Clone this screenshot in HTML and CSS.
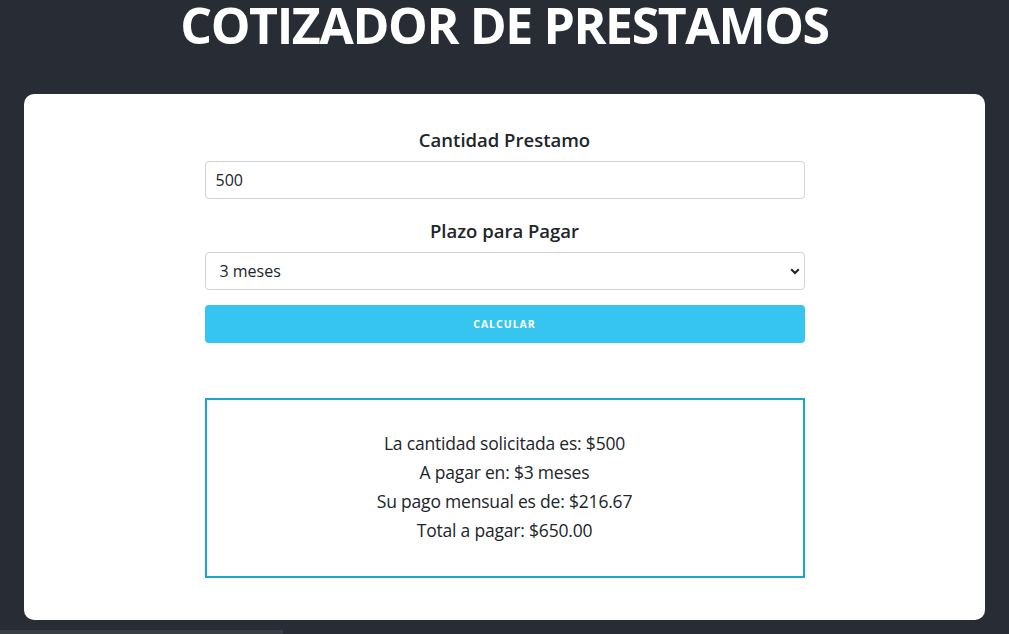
FILE: index.html
```html
<!DOCTYPE html>
<html lang="es">
<head>
<meta charset="utf-8">
<title>Cotizador de Prestamos</title>
<link rel="stylesheet" href="styles.css">
</head>
<body>
<h1 class="title">COTIZADOR DE PRESTAMOS</h1>
<main class="card">
  <form class="form">
    <div class="field">
      <label class="label" for="cantidad">Cantidad Prestamo</label>
      <input class="input" id="cantidad" type="text" value="500">
    </div>
    <div class="field">
      <label class="label" for="plazo">Plazo para Pagar</label>
      <div class="select-wrap">
        <select class="select" id="plazo">
          <option>3 meses</option>
        </select>
        <svg class="chev" width="10" height="7" viewBox="0 0 10 7"><path d="M1.2 1.2 L5 5 L8.8 1.2" fill="none" stroke="#222" stroke-width="2"/></svg>
      </div>
    </div>
    <button class="button" type="button">CALCULAR</button>
  </form>
  <section class="result">
    <p>La cantidad solicitada es: $500</p>
    <p>A pagar en: $3 meses</p>
    <p>Su pago mensual es de: $216.67</p>
    <p>Total a pagar: $650.00</p>
  </section>
</main>
<div class="bottom-bar"></div>
</body>
</html>
```

FILE: styles.css
```css
* { box-sizing: border-box; }
html, body { margin: 0; padding: 0; }
body {
  background: #282c34;
  font-family: "Open Sans", "Noto Sans", sans-serif;
  height: 634px;
  overflow: hidden;
  position: relative;
}
.title {
  margin: 0;
  height: 94px;
  padding-top: 0;
  text-align: center;
  color: #fff;
  font-size: 50px;
  font-weight: 700;
  letter-spacing: -1.4px;
  line-height: 50px;
}
.card {
  background: #fff;
  margin: 0 24px;
  height: 526px;
  border-radius: 10px;
  padding-top: 32px;
  display: flex;
  flex-direction: column;
  align-items: center;
}
.form {
  width: 600px;
  display: flex;
  flex-direction: column;
}
.field {
  display: flex;
  flex-direction: column;
  align-items: center;
  margin-bottom: 15px;
}
.field + .field { margin-top: 3px; }
.label {
  font-size: 18.5px;
  font-weight: 600;
  color: #212529;
  line-height: 27px;
  margin-bottom: 8px;
  letter-spacing: 0;
}
.input, .select {
  width: 600px;
  height: 38px;
  border: 1px solid #ced4da;
  border-radius: 4px;
  font-family: inherit;
  font-size: 16px;
  color: #212529;
  background: #fff;
  padding: 0 10px;
  outline: none;
}
.select-wrap { position: relative; width: 600px; }
.select {
  appearance: none;
  -webkit-appearance: none;
  padding-left: 14px;
}
.chev { position: absolute; right: 5px; top: 16px; }
.button {
  width: 600px;
  height: 38px;
  border: none;
  border-radius: 4px;
  background: #36c4f0;
  color: #fff;
  font-family: inherit;
  font-weight: 700;
  font-size: 10.5px;
  letter-spacing: 1px;
}
.result {
  width: 600px;
  height: 180px;
  margin-top: 55px;
  border: 2px solid #1aa9cc;
  display: flex;
  flex-direction: column;
  justify-content: center;
  align-items: center;
  padding-bottom: 3px;
}
.result p {
  margin: 0;
  font-size: 17.5px;
  line-height: 29px;
  color: #212529;
  letter-spacing: -0.2px;
}
.bottom-bar {
  position: absolute;
  left: 0;
  bottom: 0;
  width: 283px;
  height: 4px;
  background: #3a3d42;
}
```
